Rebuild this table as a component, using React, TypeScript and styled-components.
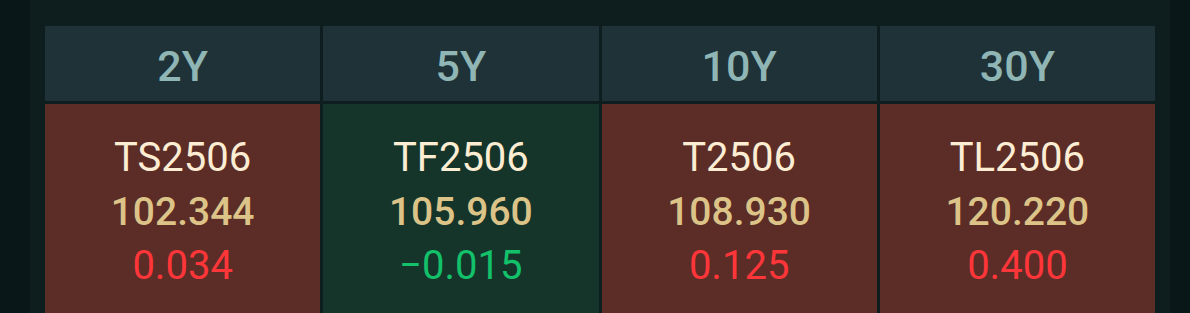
import styled, { createGlobalStyle } from 'styled-components';

const GlobalStyle = createGlobalStyle`
  html, body {
    margin: 0;
    padding: 0;
    background: #0a1718;
    font-family: Roboto, 'Noto Sans', sans-serif;
  }
`;

type Contract = {
  tenor: string;
  code: string;
  price: string;
  change: number;
};

const contracts: Contract[] = [
  { tenor: '2Y', code: 'TS2506', price: '102.344', change: 0.034 },
  { tenor: '5Y', code: 'TF2506', price: '105.960', change: -0.015 },
  { tenor: '10Y', code: 'T2506', price: '108.930', change: 0.125 },
  { tenor: '30Y', code: 'TL2506', price: '120.220', change: 0.4 },
];

const formatChange = (n: number) =>
  n < 0 ? `\u2212${Math.abs(n).toFixed(3)}` : n.toFixed(3);

const App = () => {
  return (
    <>
      <GlobalStyle />
      <Page>
        <Panel>
          <Grid>
            {contracts.map((c) => (
              <Header key={c.tenor + 'h'}>{c.tenor}</Header>
            ))}
            {contracts.map((c) => (
              <Cell key={c.code} $up={c.change >= 0}>
                <Code>{c.code}</Code>
                <Price>{c.price}</Price>
                <Change $up={c.change >= 0}>{formatChange(c.change)}</Change>
              </Cell>
            ))}
          </Grid>
        </Panel>
      </Page>
    </>
  );
};

export default App;

const Page = styled.div`
  height: 313px;
  padding: 0 20px 0 30px;
  overflow: hidden;
`;

const Panel = styled.div`
  background: #0e1d1d;
  height: 100%;
  padding: 26px 15px 0 15px;
  box-sizing: border-box;
`;

const Grid = styled.div`
  display: grid;
  grid-template-columns: repeat(4, 1fr);
  grid-template-rows: 75px 220px;
  gap: 3px;
`;

const Header = styled.div`
  background: #1e3238;
  color: #8fb5b4;
  font-size: 43px;
  font-weight: 500;
  display: flex;
  align-items: center;
  justify-content: center;
  padding-top: 4px;
  box-sizing: border-box;
`;

const Cell = styled.div<{ $up: boolean }>`
  background: ${(p) => (p.$up ? '#5c2c27' : '#15352b')};
  display: flex;
  flex-direction: column;
  align-items: center;
  padding-top: 27px;
  line-height: 54px;
  font-size: 40px;
`;

const Code = styled.div`
  color: #fdedd3;
`;

const Price = styled.div`
  color: #dcc388;
  font-size: 39px;
  font-weight: 500;
`;

const Change = styled.div<{ $up: boolean }>`
  color: ${(p) => (p.$up ? '#ff3639' : '#12c16a')};
`;
